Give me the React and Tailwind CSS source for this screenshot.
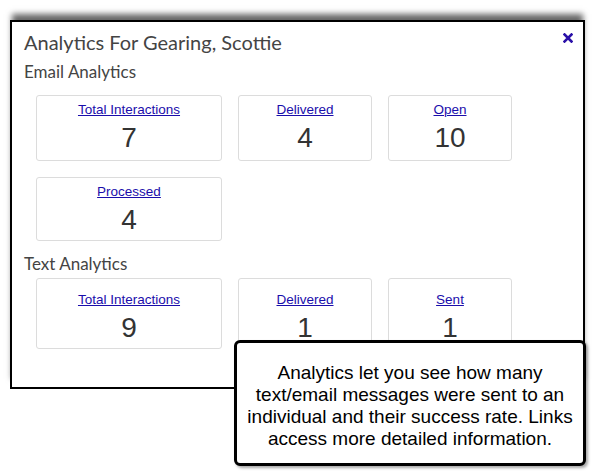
const emailStats = [
  { label: 'Total Interactions', value: 7, w: 'w-[186px]' },
  { label: 'Delivered', value: 4, w: 'w-[134px]' },
  { label: 'Open', value: 10, w: 'w-[124px]' },
]

const textStats = [
  { label: 'Total Interactions', value: 9, w: 'w-[186px]' },
  { label: 'Delivered', value: 1, w: 'w-[134px]' },
  { label: 'Sent', value: 1, w: 'w-[124px]' },
]

function StatCard({ label, value, w, h = 'h-[66px] pt-[6px]' }) {
  return (
    <div
      className={`${w} ${h} flex flex-col items-center border border-[#dcdcdc] rounded-[3px] bg-white font-['Liberation_Sans',Arial,sans-serif]`}
    >
      <a href="#" className="text-[13.5px] leading-[16px] text-[#1a0dab] underline">
        {label}
      </a>
      <span className="mt-[4px] text-[28px] leading-[32px] text-[#333]">{value}</span>
    </div>
  )
}

export default function App() {
  return (
    <div className="relative w-[596px] h-[471px] bg-white overflow-hidden">
      <div className="pt-[20px] pl-[10px]">
        <div className="relative w-[575px] h-[369px] border-2 border-black bg-white shadow-[0_-8px_6px_-2px_rgba(0,0,0,0.6)] pl-[12px] pt-[6px] font-['Lato',sans-serif] text-[#444]">
          <button className="absolute right-[10px] top-[11px]" aria-label="close">
            <svg width="10" height="10" viewBox="0 0 10 10">
              <path d="M1.5 1.5 L8.5 8.5 M8.5 1.5 L1.5 8.5" stroke="#2a10a8" strokeWidth="2.6" strokeLinecap="square" />
            </svg>
          </button>
          <h1 className="text-[20px] leading-[28px]">Analytics For Gearing, Scottie</h1>
          <h2 className="mt-[6px] text-[17px] leading-[20px]">Email Analytics</h2>
          <div className="mt-[13px] pl-[12px] flex flex-col gap-[16px]">
            <div className="flex gap-[16px]">
              {emailStats.map(s => (
                <StatCard key={s.label} {...s} />
              ))}
            </div>
            <div className="flex gap-[16px]">
              <StatCard label="Processed" value={4} w="w-[186px]" h="h-[64px] pt-[6px]" />
            </div>
          </div>
          <h2 className="mt-[13px] text-[17px] leading-[20px]">Text Analytics</h2>
          <div className="mt-[4px] pl-[12px] flex gap-[16px]">
            {textStats.map(s => (
              <StatCard key={s.label} {...s} h="h-[71px] pt-[13px]" />
            ))}
          </div>
        </div>
      </div>

      {/* callout note over the modal */}
      <div className="absolute left-[234px] top-[340px] w-[352px] h-[126px] border-[3px] border-black rounded-[6px] bg-white shadow-[2px_2px_3px_rgba(0,0,0,0.35)] flex items-center justify-center px-[6px] pt-[5px]">
        <p className="text-center text-[19px] leading-[22px] text-black font-['Liberation_Sans',Arial,sans-serif]">
          Analytics let you see how many text/email messages were sent to an individual and their success rate. Links access more detailed information.
        </p>
      </div>
    </div>
  )
}
